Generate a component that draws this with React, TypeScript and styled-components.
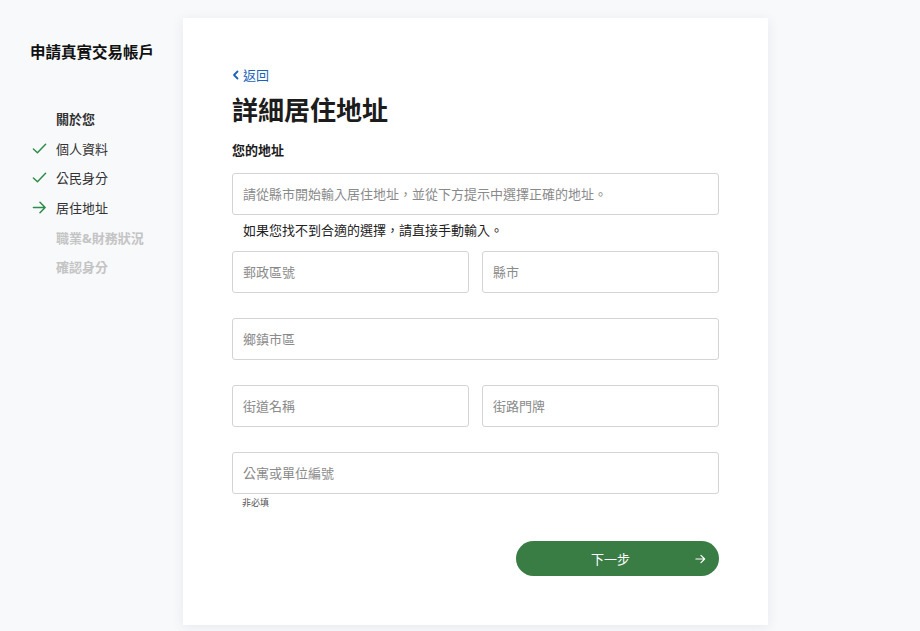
import React, { FunctionComponent } from "react"
import styled, { createGlobalStyle } from "styled-components"

const GlobalStyle = createGlobalStyle`
  html, body {
    margin: 0;
    padding: 0;
    background: #f8f9fb;
    font-family: "Noto Sans", "Noto Sans CJK TC", sans-serif;
    color: #1c1c1c;
  }
  * {
    box-sizing: border-box;
  }
`

type StepState = "done" | "current" | "idle" | "todo"

const steps: { label: string; state: StepState }[] = [
  { label: "關於您", state: "idle" },
  { label: "個人資料", state: "done" },
  { label: "公民身分", state: "done" },
  { label: "居住地址", state: "current" },
  { label: "職業&財務狀況", state: "todo" },
  { label: "確認身分", state: "todo" },
]

const CheckIcon = () => (
  <svg width="15" height="15" viewBox="0 0 16 16" fill="none">
    <path
      d="M1.5 8.5 L5.8 12.5 L14.5 3.5"
      stroke="#2e8b4a"
      strokeWidth="1.6"
      strokeLinecap="round"
      strokeLinejoin="round"
    />
  </svg>
)

const ArrowIcon = ({ color = "#2e8b4a" }: { color?: string }) => (
  <svg width="15" height="15" viewBox="0 0 16 16" fill="none">
    <path
      d="M1.5 8 H14 M8.5 2.5 L14 8 L8.5 13.5"
      stroke={color}
      strokeWidth="1.6"
      strokeLinecap="round"
      strokeLinejoin="round"
    />
  </svg>
)

const ChevronLeft = () => (
  <svg width="8" height="10" viewBox="0 0 8 10" fill="none">
    <path
      d="M5.5 1.5 L2 5 L5.5 8.5"
      stroke="#1b62b8"
      strokeWidth="1.8"
      strokeLinecap="round"
      strokeLinejoin="round"
    />
  </svg>
)

const SmallArrow = () => (
  <svg width="11" height="11" viewBox="0 0 12 12" fill="none">
    <path
      d="M1 6 H10.5 M6.5 2 L10.5 6 L6.5 10"
      stroke="#ffffff"
      strokeWidth="1.3"
      strokeLinecap="round"
      strokeLinejoin="round"
    />
  </svg>
)

export const App: FunctionComponent = () => (
  <>
    <GlobalStyle />
    <Page>
      <Sidebar>
        <SidebarTitle>申請真實交易帳戶</SidebarTitle>
        <StepList>
          {steps.map(({ label, state }) => (
            <Step key={label} state={state}>
              <StepIcon>
                {state === "done" && <CheckIcon />}
                {state === "current" && <ArrowIcon />}
              </StepIcon>
              <span>{label}</span>
            </Step>
          ))}
        </StepList>
      </Sidebar>

      <Card>
        <BackLink href="#">
          <ChevronLeft />
          返回
        </BackLink>
        <Title>詳細居住地址</Title>
        <SectionLabel>您的地址</SectionLabel>
        <Input placeholder="請從縣市開始輸入居住地址，並從下方提示中選擇正確的地址。" />
        <Helper>如果您找不到合適的選擇，請直接手動輸入。</Helper>

        <Fields>
          <Row>
            <Input placeholder="郵政區號" />
            <Input placeholder="縣市" />
          </Row>
          <Input placeholder="鄉鎮市區" />
          <Row>
            <Input placeholder="街道名稱" />
            <Input placeholder="街路門牌" />
          </Row>
          <div>
            <Input placeholder="公寓或單位編號" />
            <Optional>非必填</Optional>
          </div>
        </Fields>

        <Actions>
          <NextButton type="button">
            下一步
            <ButtonArrow>
              <SmallArrow />
            </ButtonArrow>
          </NextButton>
        </Actions>
      </Card>
    </Page>
  </>
)

export default App

const Page = styled.div`
  display: flex;
  align-items: flex-start;
  min-height: 631px;
`

const Sidebar = styled.aside`
  width: 183px;
  flex-shrink: 0;
  padding: 41px 0 0 30px;
`

const SidebarTitle = styled.h1`
  margin: 0;
  font-size: 15.5px;
  font-weight: 700;
  line-height: 22px;
  color: #111;
`

const StepList = styled.ol`
  list-style: none;
  margin: 41px 0 0;
  padding: 0;
`

const Step = styled.li<{ state: StepState }>`
  display: flex;
  align-items: center;
  height: 29.6px;
  font-size: 13px;
  font-weight: ${({ state }) =>
    state === "todo" || state === "idle" ? 700 : 400};
  color: ${({ state }) => (state === "todo" ? "#c4c4c4" : "#333")};
`

const StepIcon = styled.span`
  display: flex;
  align-items: center;
  justify-content: flex-start;
  width: 26px;
  padding-left: 2px;
`

const Card = styled.main`
  width: 585px;
  margin-top: 18px;
  min-height: 607px;
  background: #fff;
  padding: 45px 49px 48px;
  box-shadow: 0 2px 12px rgba(30, 40, 70, 0.08);
`

const BackLink = styled.a`
  display: inline-flex;
  align-items: center;
  gap: 3px;
  font-size: 13px;
  line-height: 19px;
  color: #1b62b8;
  text-decoration: none;
`

const Title = styled.h2`
  margin: 5px 0 0;
  font-size: 26px;
  font-weight: 700;
  line-height: 40px;
  color: #1c1c1c;
`

const SectionLabel = styled.div`
  margin: 11px 0 13px;
  font-size: 13px;
  font-weight: 700;
  line-height: 19px;
`

const Input = styled.input`
  display: block;
  width: 100%;
  height: 42px;
  padding: 0 10px;
  border: 1px solid #d4d4d4;
  border-radius: 3px;
  font-family: inherit;
  font-size: 13px;
  color: #333;
  background: #fff;
  outline: none;

  &::placeholder {
    color: #8a8a8a;
  }
`

const Helper = styled.p`
  margin: 5px 0 0 11px;
  font-size: 13px;
  line-height: 20px;
  color: #222;
`

const Fields = styled.div`
  display: flex;
  flex-direction: column;
  gap: 25px;
  margin-top: 11px;
`

const Row = styled.div`
  display: grid;
  grid-template-columns: 1fr 1fr;
  gap: 13px;
`

const Optional = styled.div`
  margin: 2px 0 0 10px;
  font-size: 9px;
  line-height: 14px;
  color: #555;
`

const Actions = styled.div`
  display: flex;
  justify-content: flex-end;
  margin-top: 31px;
`

const NextButton = styled.button`
  position: relative;
  width: 203px;
  height: 35px;
  padding: 0 14px 0 0;
  border: none;
  border-radius: 18px;
  background: #3a7d44;
  color: #fff;
  font-family: inherit;
  font-size: 13px;
  cursor: pointer;
`

const ButtonArrow = styled.span`
  position: absolute;
  right: 13px;
  top: 50%;
  transform: translateY(-50%);
  display: flex;
`
